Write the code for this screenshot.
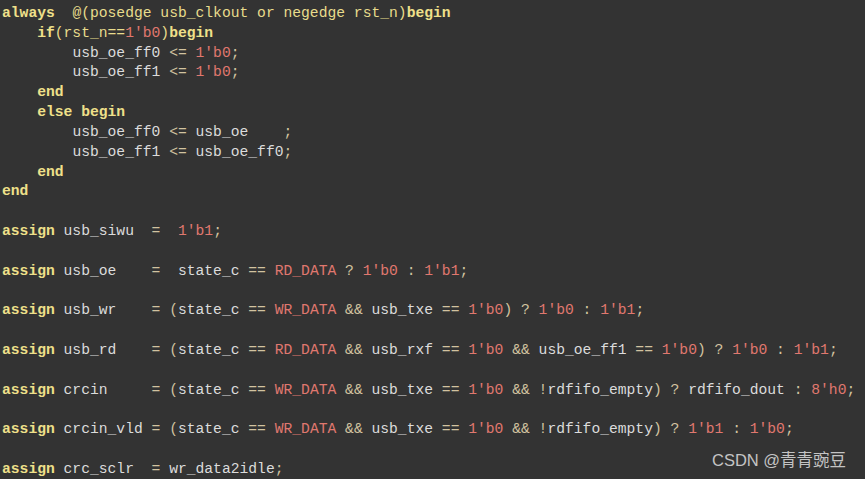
const lines = [
  { t: "always  @(posedge usb_clkout or negedge rst_n)begin", y: true },
  { t: "    if(rst_n==1'b0)begin", y: true },
  { t: "        usb_oe_ff0 <= 1'b0;" },
  { t: "        usb_oe_ff1 <= 1'b0;" },
  { t: "    end" },
  { t: "    else begin" },
  { t: "        usb_oe_ff0 <= usb_oe    ;" },
  { t: "        usb_oe_ff1 <= usb_oe_ff0;" },
  { t: "    end" },
  { t: "end" },
  { t: "" },
  { t: "assign usb_siwu  =  1'b1;" },
  { t: "" },
  { t: "assign usb_oe    =  state_c == RD_DATA ? 1'b0 : 1'b1;" },
  { t: "" },
  { t: "assign usb_wr    = (state_c == WR_DATA && usb_txe == 1'b0) ? 1'b0 : 1'b1;" },
  { t: "" },
  { t: "assign usb_rd    = (state_c == RD_DATA && usb_rxf == 1'b0 && usb_oe_ff1 == 1'b0) ? 1'b0 : 1'b1;" },
  { t: "" },
  { t: "assign crcin     = (state_c == WR_DATA && usb_txe == 1'b0 && !rdfifo_empty) ? rdfifo_dout : 8'h0;" },
  { t: "" },
  { t: "assign crcin_vld = (state_c == WR_DATA && usb_txe == 1'b0 && !rdfifo_empty) ? 1'b1 : 1'b0;" },
  { t: "" },
  { t: "assign crc_sclr  = wr_data2idle;" },
];

const keywords = ["always", "if", "begin", "end", "else", "assign"];

// split a line into tokens and pick a colour for each
function tokens(text, yellow) {
  const parts = text.match(/\d+'[bh]\w+|[A-Za-z_][A-Za-z0-9_]*|\s+|\d+|[^\sA-Za-z0-9_]/g) || [];
  return parts.map((p) => {
    if (/^\s+$/.test(p)) return { p, c: "" };
    if (keywords.includes(p)) return { p, c: "text-[#efe08a] font-bold" };
    if (/^\d+'/.test(p) || /^[A-Z][A-Z_]+$/.test(p)) return { p, c: "text-[#e0786f]" };
    if (yellow) return { p, c: "text-[#e8dc8c]" };
    if (/^[A-Za-z_]/.test(p)) return { p, c: "text-[#dcdcdc]" };
    return { p, c: "text-[#d2c3a0]" };
  });
}

export default function App() {
  return (
    <div className="relative w-[865px] h-[479px] overflow-hidden bg-[#333333]">
      <div className="pt-[4px] pl-[2px] font-['Liberation_Mono',monospace] text-[14.67px] whitespace-pre">
        {lines.map((l, i) => (
          <div key={i} className="h-[19.83px] leading-[19.83px]">
            {tokens(l.t, l.y).map((tk, j) => (
              <span key={j} className={tk.c}>
                {tk.p}
              </span>
            ))}
          </div>
        ))}
      </div>
      <div className="absolute left-[712px] top-[452px] text-[16.5px] leading-none text-[#c4c4c4] font-['Liberation_Sans','Noto_Sans_CJK_SC',sans-serif]">
        CSDN @青青豌豆
      </div>
    </div>
  );
}
